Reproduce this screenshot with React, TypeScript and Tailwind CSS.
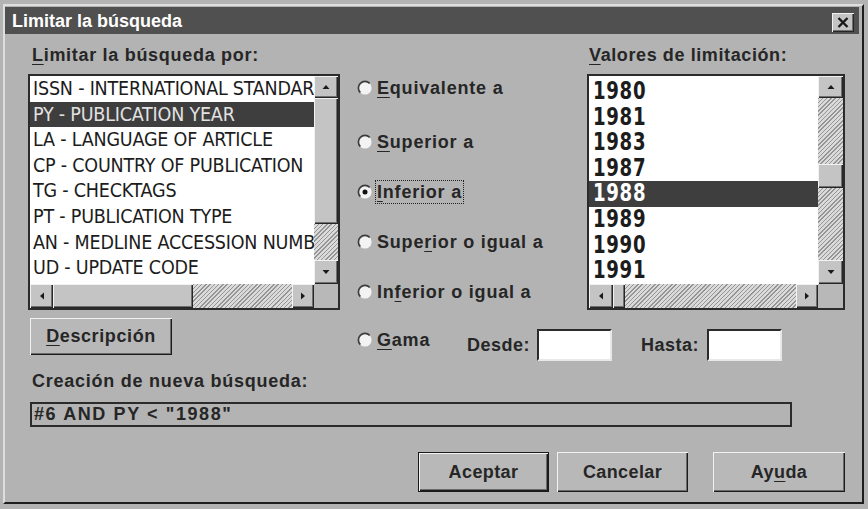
import React from "react";

const ui = "font-['Liberation_Sans',Arial,sans-serif]";
const narrow =
  "font-['Liberation_Sans_Narrow','DejaVu_Sans_Condensed','Liberation_Sans',sans-serif] font-stretch-condensed";
const hatch =
  "bg-[repeating-linear-gradient(135deg,#959595_0px,#959595_1px,#dadada_1px,#dadada_3px)]";
const face =
  "bg-[#c4c4c4] shadow-[inset_1px_1px_0_#f2f2f2,inset_-1px_-1px_0_#262626,inset_-2px_-2px_0_#707070]";
const btn =
  "bg-[#b8b8b8] shadow-[inset_1px_1px_0_#f2f2f2,inset_-1px_-1px_0_#1c1c1c,inset_-2px_-2px_0_#6a6a6a]";

const fields = [
  "ISSN - INTERNATIONAL STANDARD SERIAL NUMBER",
  "PY - PUBLICATION YEAR",
  "LA - LANGUAGE OF ARTICLE",
  "CP - COUNTRY OF PUBLICATION",
  "TG - CHECKTAGS",
  "PT - PUBLICATION TYPE",
  "AN - MEDLINE ACCESSION NUMBER",
  "UD - UPDATE CODE",
];

const years = ["1980", "1981", "1983", "1987", "1988", "1989", "1990", "1991"];

function Arrow({ dir }: { dir: "up" | "down" | "left" | "right" }) {
  const pts = {
    up: "4,2 7.5,6 0.5,6",
    down: "0.5,2 7.5,2 4,6",
    left: "6,0.5 6,7.5 2,4",
    right: "2,0.5 2,7.5 6,4",
  };
  return (
    <svg width="8" height="8" viewBox="0 0 8 8">
      <polygon points={pts[dir]} fill="#1a1a1a" />
    </svg>
  );
}

function ScrollBtn({ dir, w, h }: { dir: "up" | "down" | "left" | "right"; w: string; h: string }) {
  return (
    <div className={`${face} ${w} ${h} shrink-0 flex items-center justify-center`}>
      <Arrow dir={dir} />
    </div>
  );
}

function Radio({ on }: { on?: boolean }) {
  return (
    <svg width="16" height="16" viewBox="0 0 16 16" className="shrink-0">
      <circle cx="8" cy="8" r="6.6" fill="#f3f3f3" />
      <path d="M3.33 12.67 A6.6 6.6 0 0 1 12.67 3.33" stroke="#3c3c3c" strokeWidth="1.7" fill="none" />
      {on && <circle cx="8" cy="8" r="2.5" fill="#111" />}
    </svg>
  );
}

function RadioRow({ children, on, focus }: { children: React.ReactNode; on?: boolean; focus?: boolean }) {
  return (
    <div className="h-[24px] flex items-center ml-[2px]">
      <Radio on={on} />
      <span
        className={`ml-[4px] text-[18px] leading-[20px] font-bold tracking-[0.8px] text-[#262626] whitespace-nowrap ${
          focus ? "outline outline-1 outline-dotted outline-[#222] outline-offset-[1px]" : ""
        }`}
      >
        {children}
      </span>
    </div>
  );
}

export default function App() {
  return (
    <div className={`w-[868px] h-[509px] bg-[#b3b3b3] pt-[4px] pl-[3px] overflow-hidden ${ui}`}>
      <div className="w-[861px] h-[500px] border-2 border-t-[#dedede] border-l-[#dedede] border-r-[#1e1e1e] border-b-[#1e1e1e] flex flex-col">
        {/* title bar */}
        <div className="mt-[1px] mr-[3px] h-[27px] bg-[#505050] flex items-center justify-between pl-[7px] pr-[5px]">
          <span className="text-white font-bold text-[18px] leading-[20px]">Limitar la búsqueda</span>
          <div className={`${face} w-[22px] h-[19px] mt-[3px] flex items-center justify-center`}>
            <svg width="12" height="11" viewBox="0 0 12 11">
              <path d="M1.5 1 L10.5 10 M10.5 1 L1.5 10" stroke="#1a1a1a" strokeWidth="2.4" />
            </svg>
          </div>
        </div>

        <div className="pl-[23px] flex flex-col">
          <div className="flex">
            {/* left column */}
            <div className="w-[312px] flex flex-col">
              <div className="mt-[11px] ml-[4px] h-[20px] text-[18px] leading-[20px] font-bold tracking-[0.7px] text-[#262626]">
                <u className="underline-offset-[3px]">L</u>imitar la búsqueda por:
              </div>
              <div className="mt-[9px] w-[312px] h-[236px] border-2 border-[#2b2b2b] bg-white flex flex-col">
                <div className="flex h-[208px]">
                  <div className="flex-1 overflow-hidden">
                    {fields.map((f, i) => (
                      <div
                        key={f}
                        className={`h-[25.6px] leading-[25.6px] pl-[3px] text-[19.5px] tracking-[-0.2px] whitespace-nowrap ${narrow} ${
                          i === 1 ? "bg-[#3e3e3e] text-[#e2e2e2]" : "text-[#1c1c1c]"
                        }`}
                      >
                        {f}
                      </div>
                    ))}
                  </div>
                  <div className="w-[24px] flex flex-col">
                    <ScrollBtn dir="up" w="w-[24px]" h="h-[22px]" />
                    <div className={`${face} h-[126px] shrink-0`} />
                    <div className={`${hatch} flex-1`} />
                    <ScrollBtn dir="down" w="w-[24px]" h="h-[24px]" />
                  </div>
                </div>
                <div className="flex h-[24px]">
                  <ScrollBtn dir="left" w="w-[23px]" h="h-[24px]" />
                  <div className={`${face} w-[140px] shrink-0`} />
                  <div className={`${hatch} flex-1`} />
                  <ScrollBtn dir="right" w="w-[22px]" h="h-[24px]" />
                  <div className="w-[24px] bg-[#b8b8b8]" />
                </div>
              </div>
              <button
                className={`${btn} mt-[8px] ml-[2px] w-[142px] h-[37px] text-[18px] font-bold tracking-[0.6px] text-[#262626]`}
              >
                <u className="underline-offset-[3px]">D</u>escripción
              </button>
            </div>

            {/* middle + right */}
            <div className="flex flex-col">
              <div className="flex">
                <div className="ml-[15px] w-[232px] pt-[42px] flex flex-col gap-[26px]">
                  <div className="mb-[4px]">
                    <RadioRow>
                      <u className="underline-offset-[3px]">E</u>quivalente a
                    </RadioRow>
                  </div>
                  <RadioRow>
                    <u className="underline-offset-[3px]">S</u>uperior a
                  </RadioRow>
                  <RadioRow on focus>
                    <u className="underline-offset-[3px]">I</u>nferior a
                  </RadioRow>
                  <RadioRow>
                    Supe<u className="underline-offset-[3px]">r</u>ior o igual a
                  </RadioRow>
                  <RadioRow>
                    In<u className="underline-offset-[3px]">f</u>erior o igual a
                  </RadioRow>
                </div>

                <div className="w-[258px] flex flex-col">
                  <div className="mt-[11px] ml-[2px] h-[20px] text-[18px] leading-[20px] font-bold tracking-[0.6px] text-[#262626]">
                    <u className="underline-offset-[3px]">V</u>alores de limitación:
                  </div>
                  <div className="mt-[9px] w-[258px] h-[236px] border-2 border-[#2b2b2b] bg-white flex flex-col">
                    <div className="flex h-[208px]">
                      <div className="flex-1 overflow-hidden pt-[3px]">
                        {years.map((y) => (
                          <div
                            key={y}
                            className={`h-[25.6px] leading-[25.6px] pl-[4px] ${
                              y === "1988" ? "bg-[#3e3e3e] text-white" : "text-[#1c1c1c]"
                            }`}
                          >
                            <span
                              className={`inline-block origin-left scale-x-[0.84] text-[24px] font-bold tracking-[0.8px] ${narrow}`}
                            >
                              {y}
                            </span>
                          </div>
                        ))}
                      </div>
                      <div className="w-[25px] flex flex-col">
                        <ScrollBtn dir="up" w="w-[25px]" h="h-[22px]" />
                        <div className={`${hatch} h-[66px] shrink-0`} />
                        <div className={`${face} h-[24px] shrink-0`} />
                        <div className={`${hatch} flex-1`} />
                        <ScrollBtn dir="down" w="w-[25px]" h="h-[24px]" />
                      </div>
                    </div>
                    <div className="flex h-[24px]">
                      <ScrollBtn dir="left" w="w-[24px]" h="h-[24px]" />
                      <div className={`${face} w-[12px] shrink-0`} />
                      <div className={`${hatch} flex-1`} />
                      <ScrollBtn dir="right" w="w-[22px]" h="h-[24px]" />
                      <div className="w-[25px] bg-[#b8b8b8]" />
                    </div>
                  </div>
                </div>
              </div>

              {/* gama row */}
              <div className="mt-[19px] ml-[15px] h-[32px] flex items-center">
                <div className="w-[112px] -mt-[10px]">
                  <RadioRow>
                    <u className="underline-offset-[3px]">G</u>ama
                  </RadioRow>
                </div>
                <span className="w-[70px] text-[18px] font-bold tracking-[0.5px] text-[#262626]">Desde:</span>
                <div className="w-[75px] h-[32px] bg-white border-2 border-t-[#2b2b2b] border-l-[#2b2b2b] border-r-[#e8e8e8] border-b-[#e8e8e8]" />
                <span className="ml-[29px] w-[66px] text-[18px] font-bold tracking-[0.5px] text-[#262626]">Hasta:</span>
                <div className="w-[75px] h-[32px] bg-white border-2 border-t-[#2b2b2b] border-l-[#2b2b2b] border-r-[#e8e8e8] border-b-[#e8e8e8]" />
              </div>
            </div>
          </div>

          {/* new search */}
          <div className="mt-[10px] ml-[4px] h-[20px] text-[18px] leading-[20px] font-bold tracking-[0.75px] text-[#262626]">
            Creación de nueva búsqueda:
          </div>
          <div className="mt-[11px] ml-[2px] w-[762px] h-[25px] border-2 border-[#2b2b2b] bg-[#b3b3b3] pl-[2px] text-[18px] leading-[21px] font-bold tracking-[1.6px] text-[#262626]">
            #6 AND PY &lt; "1988"
          </div>

          <div className="mt-[25px] pr-[17px] flex justify-end">
            <button
              className={`${btn} w-[131px] h-[40px] border border-[#1a1a1a] text-[18px] font-bold tracking-[0.4px] text-[#262626]`}
            >
              Aceptar
            </button>
            <button className={`${btn} ml-[8px] w-[131px] h-[40px] text-[18px] font-bold tracking-[0.4px] text-[#262626]`}>
              Cancelar
            </button>
            <button className={`${btn} ml-[25px] w-[132px] h-[40px] text-[18px] font-bold tracking-[0.4px] text-[#262626]`}>
              Ay<u className="underline-offset-[3px]">u</u>da
            </button>
          </div>
        </div>
      </div>
    </div>
  );
}
